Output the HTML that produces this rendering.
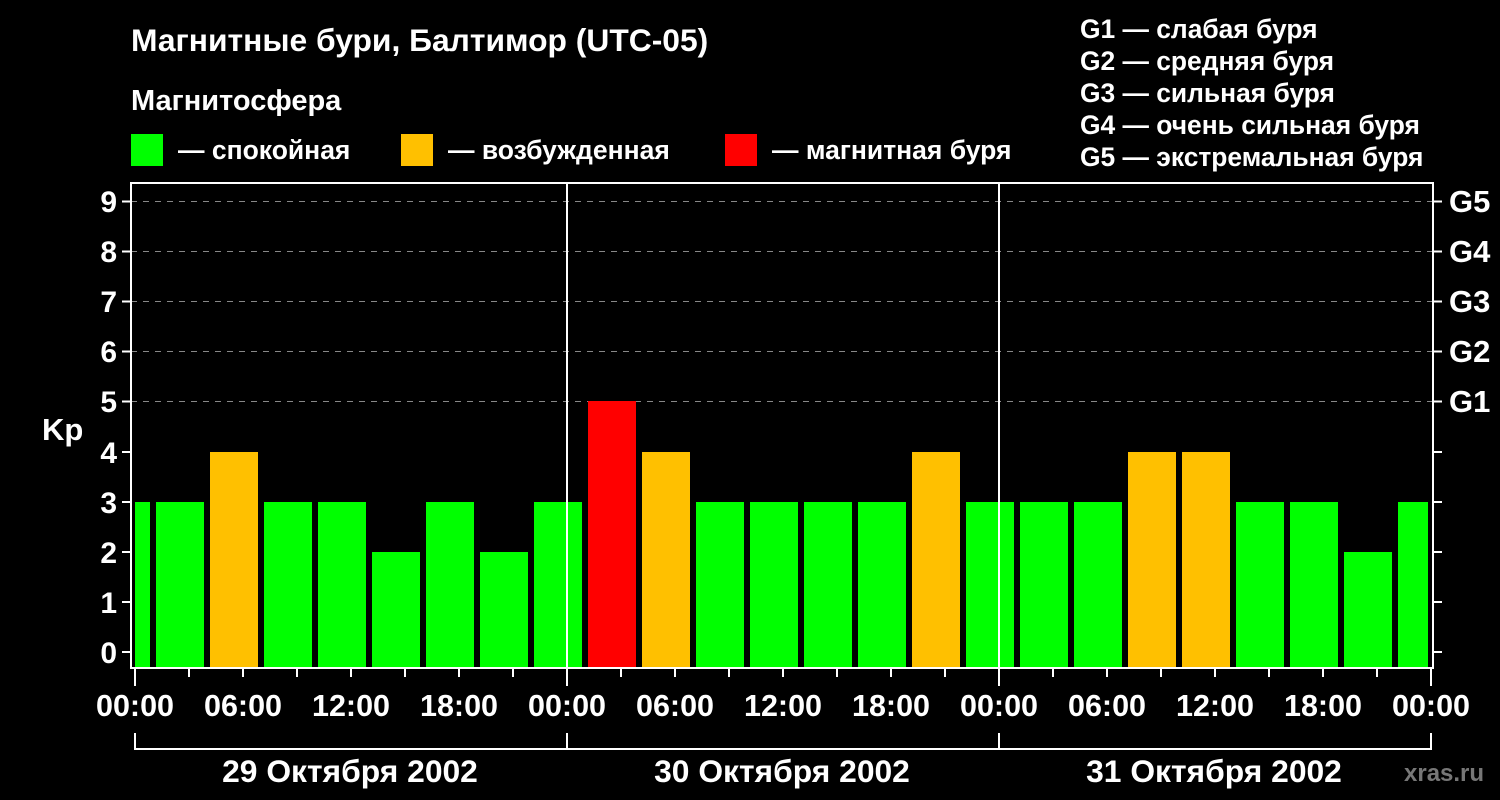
<!DOCTYPE html>
<html><head><meta charset="utf-8"><style>
html,body{margin:0;padding:0;background:#000;width:1500px;height:800px;overflow:hidden}
svg{display:block}
text{font-family:"Liberation Sans",Arial,sans-serif;font-weight:bold;fill:#fff}
</style></head><body>
<svg width="1500" height="800" viewBox="0 0 1500 800">
<rect width="1500" height="800" fill="#000"/>
<text x="131" y="51" font-size="31.8">Магнитные бури, Балтимор (UTC-05)</text>
<text x="131" y="110" font-size="29">Магнитосфера</text>
<rect x="131" y="134" width="32" height="32" fill="#00ff00"/>
<text x="178" y="159" font-size="26.5">— спокойная</text>
<rect x="401" y="134" width="32" height="32" fill="#ffc000"/>
<text x="448" y="159" font-size="26.5">— возбужденная</text>
<rect x="725" y="134" width="32" height="32" fill="#ff0000"/>
<text x="772" y="159" font-size="26.5">— магнитная буря</text>
<g font-size="26.4">
<text x="1080" y="38">G1 — слабая буря</text>
<text x="1080" y="70">G2 — средняя буря</text>
<text x="1080" y="102">G3 — сильная буря</text>
<text x="1080" y="134">G4 — очень сильная буря</text>
<text x="1080" y="166">G5 — экстремальная буря</text>
</g>
<g stroke="#888" stroke-width="1" stroke-dasharray="6,6">
<line x1="131" y1="201.5" x2="1432" y2="201.5"/>
<line x1="131" y1="251.5" x2="1432" y2="251.5"/>
<line x1="131" y1="301.5" x2="1432" y2="301.5"/>
<line x1="131" y1="351.5" x2="1432" y2="351.5"/>
<line x1="131" y1="401.5" x2="1432" y2="401.5"/>
</g>
<g fill="#00ff00">
<rect x="135" y="502" width="15" height="165"/>
<rect x="156" y="502" width="48" height="165"/>
<rect x="210" y="452" width="48" height="215" fill="#ffc000"/>
<rect x="264" y="502" width="48" height="165"/>
<rect x="318" y="502" width="48" height="165"/>
<rect x="372" y="552" width="48" height="115"/>
<rect x="426" y="502" width="48" height="165"/>
<rect x="480" y="552" width="48" height="115"/>
<rect x="534" y="502" width="48" height="165"/>
<rect x="588" y="401" width="48" height="266" fill="#ff0000"/>
<rect x="642" y="452" width="48" height="215" fill="#ffc000"/>
<rect x="696" y="502" width="48" height="165"/>
<rect x="750" y="502" width="48" height="165"/>
<rect x="804" y="502" width="48" height="165"/>
<rect x="858" y="502" width="48" height="165"/>
<rect x="912" y="452" width="48" height="215" fill="#ffc000"/>
<rect x="966" y="502" width="48" height="165"/>
<rect x="1020" y="502" width="48" height="165"/>
<rect x="1074" y="502" width="48" height="165"/>
<rect x="1128" y="452" width="48" height="215" fill="#ffc000"/>
<rect x="1182" y="452" width="48" height="215" fill="#ffc000"/>
<rect x="1236" y="502" width="48" height="165"/>
<rect x="1290" y="502" width="48" height="165"/>
<rect x="1344" y="552" width="48" height="115"/>
<rect x="1398" y="502" width="30" height="165"/>
</g>
<g stroke="#fff" stroke-width="2" fill="none">
<rect x="131" y="183" width="1302" height="485"/>
<line x1="567" y1="183" x2="567" y2="668"/>
<line x1="999" y1="183" x2="999" y2="668"/>
<path d="M122 201.5H131M122 251.5H131M122 301.5H131M122 351.5H131M122 401.5H131M122 452H131M122 502H131M122 552H131M122 602H131M122 652H131"/>
<path d="M1433 201.5H1442M1433 251.5H1442M1433 301.5H1442M1433 351.5H1442M1433 401.5H1442M1433 452H1442M1433 502H1442M1433 552H1442M1433 602H1442M1433 652H1442"/>
<path d="M135 668V686M567 668V686M999 668V686M1431 668V686"/>
<path d="M189 668V677M243 668V677M297 668V677M351 668V677M405 668V677M459 668V677M513 668V677M621 668V677M675 668V677M729 668V677M783 668V677M837 668V677M891 668V677M945 668V677M1053 668V677M1107 668V677M1161 668V677M1215 668V677M1269 668V677M1323 668V677M1377 668V677"/>
<path d="M135 733V749H1431V733M567 733V749M999 733V749"/>
</g>
<g font-size="30" text-anchor="end">
<text x="117" y="212">9</text><text x="117" y="262">8</text><text x="117" y="312">7</text>
<text x="117" y="362">6</text><text x="117" y="412">5</text><text x="117" y="463">4</text>
<text x="117" y="513">3</text><text x="117" y="563">2</text><text x="117" y="613">1</text>
<text x="117" y="663">0</text>
</g>
<text x="42" y="440" font-size="31">Kp</text>
<g font-size="31">
<text x="1449" y="212">G5</text><text x="1449" y="262">G4</text><text x="1449" y="312">G3</text>
<text x="1449" y="362">G2</text><text x="1449" y="412">G1</text>
</g>
<g font-size="30.5" text-anchor="middle">
<text x="135" y="716">00:00</text><text x="243" y="716">06:00</text><text x="351" y="716">12:00</text>
<text x="459" y="716">18:00</text><text x="567" y="716">00:00</text><text x="675" y="716">06:00</text>
<text x="783" y="716">12:00</text><text x="891" y="716">18:00</text><text x="999" y="716">00:00</text>
<text x="1107" y="716">06:00</text><text x="1215" y="716">12:00</text><text x="1323" y="716">18:00</text>
<text x="1431" y="716">00:00</text>
<text x="350" y="782" font-size="31.8">29 Октября 2002</text>
<text x="782" y="782" font-size="31.8">30 Октября 2002</text>
<text x="1214" y="782" font-size="31.8">31 Октября 2002</text>
</g>
<text x="1404" y="781" font-size="24" style="fill:#777">xras.ru</text>
</svg>
</body></html>
